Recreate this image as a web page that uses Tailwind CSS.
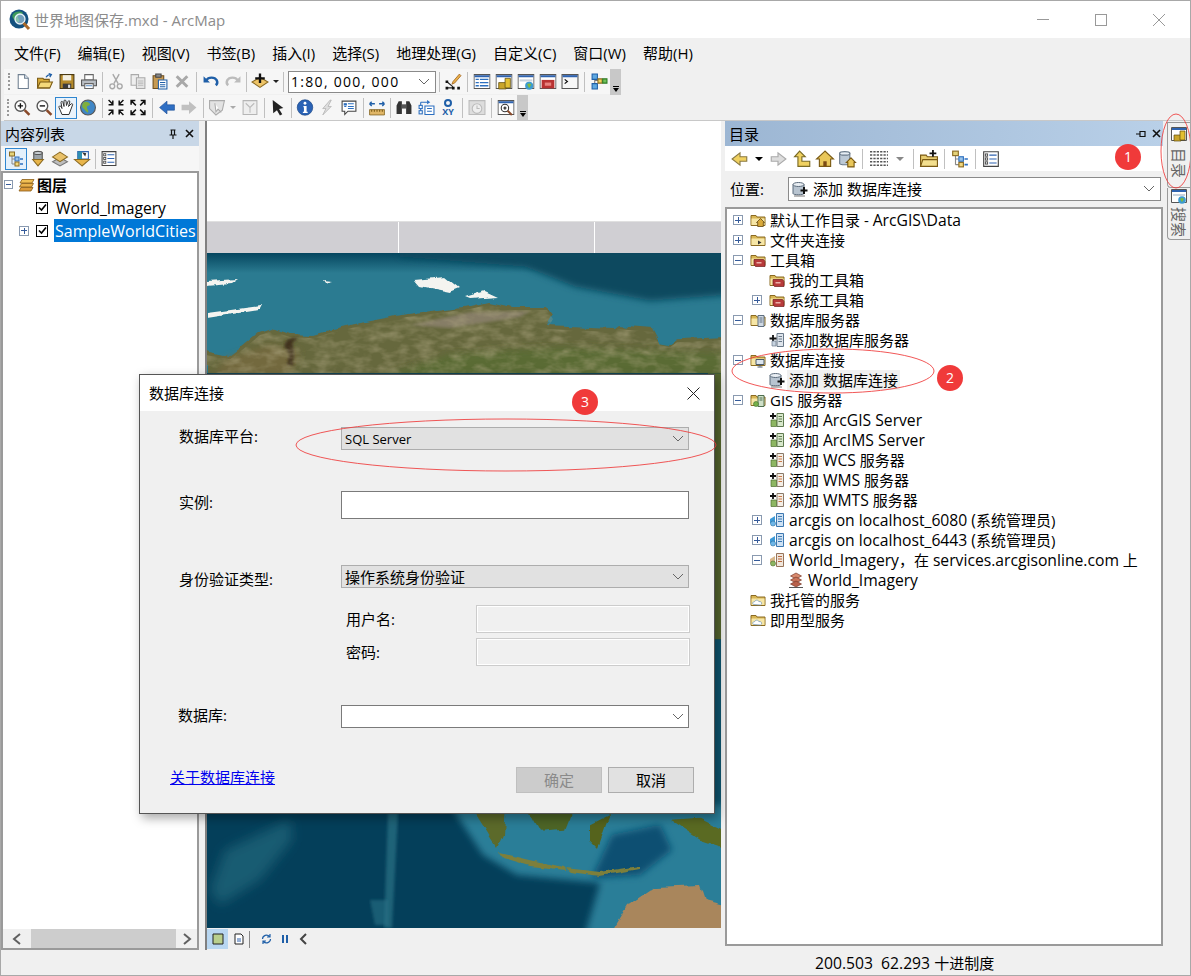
<!DOCTYPE html>
<html lang="en">
<head>
  <meta charset="UTF-8">
  <title>ArcMap</title>
  <script src="https://cdn.jsdelivr.net/npm/@tailwindcss/browser@4"></script>
</head>
<body class="bg-white">

<!-- shared icons -->
<svg class="hidden">
  <symbol id="new" viewBox="0 0 16 16"><path d="M3.5 1.5h6l3.5 3.5v9.500h-9.500z" fill="#fff" stroke="#6f7f90"/><path d="M9.500 1.500v3.500h3.500" fill="#dfe8f2" stroke="#6f7f90"/></symbol>
  <symbol id="open" viewBox="0 0 16 16"><path d="M1 14V5h5l1 1h5v8z" fill="#d9ac3a" stroke="#7a5a14"/><path d="M1 14l2.500-5.500H15L12.500 14z" fill="#f5d97a" stroke="#7a5a14"/><path d="M9 4c1-2 3-2.500 4.500-2.500M11.500 0.500l2.500 1-1.500 2.300" fill="none" stroke="#1f5fa8" stroke-width="1.200"/></symbol>
  <symbol id="save" viewBox="0 0 16 16"><path d="M1.500 1.500h13v13h-13z" fill="#b58a2a" stroke="#4a3a12"/><path d="M4 2h8v5H4z" fill="#f3efe2"/><path d="M4 10h8v4.500H4z" fill="#3c3c3c"/><path d="M9 11h2v3H9z" fill="#ddd"/></symbol>
  <symbol id="print" viewBox="0 0 16 16"><path d="M4 1.500h8v5H4z" fill="#fff" stroke="#666"/><path d="M1 6.500h14v5.500H1z" fill="#b9bec4" stroke="#555"/><path d="M4 10h8v4.500H4z" fill="#fff" stroke="#666"/><path d="M5 12h6" stroke="#5b8fc7"/></symbol>
  <symbol id="cut" viewBox="0 0 16 16"><path d="M5 1l5 9M11 1L6 10" stroke="#a8a8a8" stroke-width="1.300" fill="none"/><circle cx="4.500" cy="12.500" r="2.300" fill="none" stroke="#a8a8a8" stroke-width="1.300"/><circle cx="11.500" cy="12.500" r="2.300" fill="none" stroke="#a8a8a8" stroke-width="1.300"/></symbol>
  <symbol id="copy" viewBox="0 0 16 16"><path d="M1.500 1.500h7v10h-7z" fill="#eee" stroke="#aaa"/><path d="M6.500 4.500h8v10h-8z" fill="#e4e4e4" stroke="#aaa"/><path d="M8 7.500h5M8 9.500h5M8 11.500h5" stroke="#bbb"/></symbol>
  <symbol id="paste" viewBox="0 0 16 16"><path d="M1.500 2.500h10v12h-10z" fill="#c79a52" stroke="#6d4e1e"/><path d="M4 1h5v3H4z" fill="#888" stroke="#444"/><path d="M6.500 6.500h8v8.500h-8z" fill="#fff" stroke="#1f5fa8"/><path d="M8 9h5M8 11h5M8 13h5" stroke="#1f5fa8"/></symbol>
  <symbol id="del" viewBox="0 0 16 16"><path d="M3 3l10 10M13 3L3 13" stroke="#a8a8a8" stroke-width="2.800"/></symbol>
  <symbol id="undo" viewBox="0 0 16 16"><path d="M3.500 7c2-3.500 8-3.500 10 0 .8 1.800.2 3.500-1 4.500" fill="none" stroke="#1f5fa8" stroke-width="2.300"/><path d="M1 3v6h6z" fill="#1f5fa8"/></symbol>
  <symbol id="redo" viewBox="0 0 16 16"><path d="M12.500 7c-2-3.500-8-3.500-10 0-.8 1.800-.2 3.500 1 4.500" fill="none" stroke="#bcbcbc" stroke-width="2.300"/><path d="M15 3v6H9z" fill="#bcbcbc"/></symbol>
  <symbol id="add" viewBox="0 0 16 16"><path d="M8 4l7.500 4.500L8 13.500.5 8.500z" fill="#eec467" stroke="#8a6a22"/><path d="M8 .5v9M3.500 5h9" stroke="#111" stroke-width="2.200"/></symbol>
  <symbol id="edit" viewBox="0 0 16 16"><path d="M2 8l6 5M2 14h7" stroke="#222"/><path d="M1 7h2.500v2.500H1zM1 13h2.500v2.500H1zM7 13h2.500v2.500H7zM12 13h2.500v2.500H12z" fill="#111"/><path d="M8 8l6-7 1.500 1.500-6 7-2.500 1z" fill="#e8b04a" stroke="#9b5c1a" stroke-width=".7"/></symbol>
  <symbol id="win" viewBox="0 0 16 16"><path d="M.5 1.500h15v13H.5z" fill="#fff" stroke="#555"/><path d="M1 2h14v2H1z" fill="#2f63b0"/></symbol>
  <symbol id="wintoc" viewBox="0 0 16 16"><use href="#win"/><path d="M2 6h3M6 6h8M2 9h3M6 9h8M2 12h3M6 12h8" stroke="#2c6fc0" stroke-width="1.200"/></symbol>
  <symbol id="wincat" viewBox="0 0 16 16"><use href="#win"/><path d="M3 9h7v6H3z" fill="#caa52a" stroke="#5f4b0c" stroke-width=".7"/><path d="M9 5h5v9H9z" fill="#e3c032" stroke="#5f4b0c" stroke-width=".7"/></symbol>
  <symbol id="winsearch" viewBox="0 0 16 16"><use href="#win"/><path d="M2 6h12v2H2z" fill="#c9d3de"/><circle cx="11" cy="12" r="3.800" fill="#3c9bd0"/><path d="M9 11c1-1.500 3-1.500 4 0-1 1-1 2-2 3-1-1-1-2-2-3z" fill="#7fba3e"/></symbol>
  <symbol id="wintool" viewBox="0 0 16 16"><use href="#win"/><path d="M2 6.500h12v8H2z" fill="#b93232"/><path d="M5 9h6v3H5z" fill="#e8837f"/></symbol>
  <symbol id="winpy" viewBox="0 0 16 16"><path d="M.5 1.500h15v13H.5z" fill="#f7f7f7" stroke="#555"/><path d="M1 2h14v2H1z" fill="#2f63b0"/><path d="M3 6l2.500 2L3 10" fill="none" stroke="#111" stroke-width="1.200"/></symbol>
  <symbol id="model" viewBox="0 0 16 16"><path d="M4 4v8M4 7h5" stroke="#777"/><path d="M1.500 1h5v5h-5zM1.500 10h5v5h-5z" fill="#5ea8e0" stroke="#1f5fa8"/><path d="M7 5.500h4v4H7z" fill="#f2d35a" stroke="#8a6a22"/><path d="M11.500 5.500h4v4h-4z" fill="#6ec05a" stroke="#2d7a22"/></symbol>
  <symbol id="zoomin" viewBox="0 0 16 16"><circle cx="6.500" cy="6.500" r="5" fill="#fff" stroke="#555" stroke-width="1.300"/><path d="M4 6.500h5M6.500 4v5" stroke="#111" stroke-width="1.300"/><path d="M10.500 10.500l4.500 4.500" stroke="#8a4a2a" stroke-width="2.400"/></symbol>
  <symbol id="zoomout" viewBox="0 0 16 16"><circle cx="6.500" cy="6.500" r="5" fill="#fff" stroke="#555" stroke-width="1.300"/><path d="M4 6.500h5" stroke="#111" stroke-width="1.300"/><path d="M10.500 10.500l4.500 4.500" stroke="#8a4a2a" stroke-width="2.400"/></symbol>
  <symbol id="pan" viewBox="0 0 16 16"><path d="M4 15L1 8c-.5-1.500 1-2 2-1l1 2-1-6c0-1.500 1.500-1.500 2 0l1 4V1.500c0-1.300 1.800-1.300 2 0L8.500 6 10 2c.5-1.300 2-1 1.800.5L10.500 7 13 4.500c1-.8 2 0 1.500 1L11 15z" fill="#fff" stroke="#333"/></symbol>
  <symbol id="globe" viewBox="0 0 16 16"><circle cx="8" cy="8" r="7" fill="#3f86c6" stroke="#555"/><path d="M4 3c3-1 5 0 6 2-1 2-3 1-3 3s2 2 1 5c-2-1-3-3-4-4-2-1-2-4 0-6z" fill="#7fae3e"/></symbol>
  <symbol id="fixin" viewBox="0 0 16 16"><path d="M1 1l4 4M5 1.500V5.500H1M15 1l-4 4M11 1.500V5.500h4M1 15l4-4M5 14.500V10.500H1M15 15l-4-4M11 14.500V10.500h4" stroke="#111" stroke-width="1.400" fill="none"/></symbol>
  <symbol id="fixout" viewBox="0 0 16 16"><path d="M2 2l4 4M1.500 5.500V1.500h4M14 2l-4 4M14.500 5.500V1.500h-4M2 14l4-4M1.500 10.500v4h4M14 14l-4-4M14.500 10.500v4h-4" stroke="#111" stroke-width="1.400" fill="none"/></symbol>
  <symbol id="back" viewBox="0 0 16 16"><path d="M1 8l7-6v3.500h7v5H8V14z" fill="#2f6fc4" stroke="#1f4f94" stroke-width=".6"/></symbol>
  <symbol id="fwd" viewBox="0 0 16 16"><path d="M15 8L8 2v3.500H1v5h7V14z" fill="#c0c0c0"/></symbol>
  <symbol id="selfeat" viewBox="0 0 16 16"><path d="M1 1.500h14l-2 9L7 15 1 9z" fill="#e3e3e3" stroke="#aaa"/><path d="M6 4l1 8 2-2.500 3 3" fill="#fff" stroke="#aaa"/></symbol>
  <symbol id="clearsel" viewBox="0 0 16 16"><path d="M1.500 1.500h13v13h-13z" fill="#eee" stroke="#b5b5b5"/><path d="M4 4l4 4 4-4M8 8v5" stroke="#bbb" fill="none"/></symbol>
  <symbol id="pointer" viewBox="0 0 16 16"><path d="M3 1l10 7.500-4 .8 3 5-2.200 1.200-2.800-5-3.500 3z" fill="#222"/></symbol>
  <symbol id="info" viewBox="0 0 16 16"><circle cx="8" cy="8" r="7.300" fill="#2a62b5" stroke="#123f80" stroke-width=".6"/><path d="M6.500 6.500h3V12h1v1.200H6V12h1V7.700H6.500z" fill="#fff"/><circle cx="8" cy="4" r="1.300" fill="#fff"/></symbol>
  <symbol id="flash" viewBox="0 0 16 16"><path d="M11 1L4 9h3l-3 6 8-8H9l3-6z" fill="#dedede" stroke="#b0b0b0" stroke-width=".7"/></symbol>
  <symbol id="popup" viewBox="0 0 16 16"><path d="M1.500 2h13v9.500H7l-3 3v-3H1.500z" fill="#fff" stroke="#444"/><path d="M3.500 4.500h2v1h-2zM7 4.500h5.500M3.500 7h2M7 7h5.500M7 9h5.500" stroke="#2c6fc0"/></symbol>
  <symbol id="measure" viewBox="0 0 16 16"><path d="M1 10h14v5H1z" fill="#e0b667" stroke="#7a5a14" stroke-width=".7"/><path d="M3 10v2M5.500 10v2M8 10v2M10.500 10v2M13 10v2" stroke="#7a5a14"/><path d="M1 4.500h5M1 4.500l2-2M1 4.500l2 2M15 4.500h-5M15 4.500l-2-2M15 4.500l-2 2" stroke="#1f5fa8" stroke-width="1.300" fill="none"/></symbol>
  <symbol id="find" viewBox="0 0 16 16"><path d="M1 14V6l2-4h3v12zM15 14V6l-2-4h-3v12z" fill="#333"/><path d="M6 5h4v4H6z" fill="#555"/></symbol>
  <symbol id="route" viewBox="0 0 16 16"><path d="M7 6.500h8.500v8H7z" fill="#fff" stroke="#2c6fc0"/><path d="M9 9h4.500M9 11.500h4.500" stroke="#2c6fc0"/><path d="M3 3v10M3 3h6" stroke="#2c6fc0"/><path d="M9 1l3 2-3 2z" fill="#2c6fc0"/><rect x="1.500" y="6" width="3" height="3" fill="#fff" stroke="#2c6fc0"/><rect x="1.500" y="11" width="3" height="3" fill="#fff" stroke="#2c6fc0"/></symbol>
  <symbol id="time" viewBox="0 0 16 16"><path d="M.5 1.500h15v13H.5z" fill="#ddd" stroke="#bbb"/><circle cx="8" cy="9" r="4.500" fill="#eee" stroke="#bbb"/><path d="M8 6v3h2.500" stroke="#bbb" fill="none"/></symbol>
  <symbol id="viewer" viewBox="0 0 16 16"><use href="#win"/><circle cx="7" cy="8.500" r="3.500" fill="#fff" stroke="#333"/><path d="M5.500 8.500h3M7 7v3" stroke="#111"/><path d="M9.500 11l4 4" stroke="#8a4a2a" stroke-width="2"/></symbol>
  <symbol id="tree" viewBox="0 0 16 16"><path d="M4 5v8M4 8h3M4 13h3" stroke="#888"/><rect x="1.500" y="1" width="5" height="4" fill="#e4d37a" stroke="#8a6a22"/><rect x="7" y="6" width="4" height="4" fill="#9cc4e8" stroke="#2c6fc0"/><rect x="7" y="11" width="4" height="4" fill="#f1d87f" stroke="#8a6a22"/><path d="M12 8h3M12 13h3" stroke="#2c6fc0" stroke-width="1.500"/></symbol>
  <symbol id="options" viewBox="0 0 16 16"><path d="M1.500 1.500h13v13h-13z" fill="#fff" stroke="#444"/><rect x="3" y="3.500" width="2" height="2" fill="none" stroke="#444" stroke-width=".8"/><rect x="3" y="7" width="2" height="2" fill="none" stroke="#444" stroke-width=".8"/><rect x="3" y="10.500" width="2" height="2" fill="none" stroke="#444" stroke-width=".8"/><path d="M6.500 4.500H13M6.500 8H13M6.500 11.500H13" stroke="#2f63b0"/></symbol>
  <symbol id="source" viewBox="0 0 16 16"><path d="M4 2.500h8v7H4z" fill="#9aa2a8" stroke="#555"/><ellipse cx="8" cy="2.800" rx="4" ry="1.500" fill="#c9cfd4" stroke="#555"/><path d="M3 9h10l-5 6z" fill="#e8b54a" stroke="#8a6a22"/></symbol>
  <symbol id="visible" viewBox="0 0 16 16"><path d="M8 7l7 4-7 4-7-4z" fill="#bdbdbd" stroke="#777"/><path d="M8 2l7 4.500-7 4.500-7-4.500z" fill="#e9c169" stroke="#8a6a22"/></symbol>
  <symbol id="selectable" viewBox="0 0 16 16"><path d="M4 1.500h10v7H4z" fill="#fff" stroke="#2f63b0"/><path d="M8 2l3 4 1-3z" fill="#333"/><path d="M4 1.500h4v7H4z" fill="#2f8fb0"/><path d="M8 15L1 9h14z" fill="#e8b54a" stroke="#8a6a22"/></symbol>
  <symbol id="layers" viewBox="0 0 16 16"><path d="M3 2.500h12l-2 3.500H1z" fill="#f0bf55" stroke="#8a5c14" stroke-width=".8"/><path d="M2.500 6.500h12l-2 3.500H.5z" fill="#e9b04a" stroke="#8a5c14" stroke-width=".8"/><path d="M2 10.500h12l-2 3.500H0z" fill="#dc9a3a" stroke="#8a5c14" stroke-width=".8"/></symbol>
  <symbol id="cback" viewBox="0 0 16 16"><path d="M1 8l7-5.500V6h6v4H8v3.500z" fill="#f0d160" stroke="#8a7a44"/></symbol>
  <symbol id="cfwd" viewBox="0 0 16 16"><path d="M15 8L8 2.500V6H2v4h6v3.500z" fill="#ddd" stroke="#aaa"/></symbol>
  <symbol id="cup" viewBox="0 0 16 16"><path d="M5 1l5 5H7v4h7v4.500H3.500V6H.5z" fill="#f0d160" stroke="#7a6a24"/></symbol>
  <symbol id="home" viewBox="0 0 16 16"><path d="M8 1L.5 8h2.500v6.500h10V8h2.500z" fill="#e9c75a" stroke="#7a5a14"/><path d="M6.500 10h3v4.500h-3z" fill="#7a4a14"/></symbol>
  <symbol id="dbhome" viewBox="0 0 16 16"><path d="M1.500 3v9c0 1.500 9 1.500 9 0V3z" fill="#bcc9d6" stroke="#6a7a8a"/><ellipse cx="6" cy="3" rx="4.500" ry="1.600" fill="#e6edf4" stroke="#6a7a8a"/><path d="M11.500 7l-4 4h1.200v4h5.600v-4h1.200z" fill="#e9c75a" stroke="#7a5a14"/></symbol>
  <symbol id="grid" viewBox="0 0 16 16"><path d="M0 1.500h16M0 4.500h16M0 7.500h16M0 10.500h16M0 13.500h16" stroke="#555" stroke-dasharray="2 1" stroke-width="1.300"/></symbol>
  <symbol id="newfolder" viewBox="0 0 16 16"><path d="M.5 14.500v-10h5l1 1.500h9v8.500z" fill="#e8cd70" stroke="#7a5a14"/><path d="M.5 14.500l2-6h13v6z" fill="#f3df8e" stroke="#7a5a14"/><path d="M11.500 0v6M8.500 3h6" stroke="#111" stroke-width="1.600"/></symbol>
  <symbol id="folder" viewBox="0 0 16 16"><path d="M1 13.500v-10h5l1 1.500h8v8.500z" fill="#d8b655" stroke="#8a6a22"/><path d="M1.500 6.500h13v6.500h-13z" fill="#f6e6a6"/></symbol>
  <symbol id="fhome" viewBox="0 0 16 16"><use href="#folder"/><path d="M10.500 6.500L6.500 10.500h1.200v4h5.600v-4h1.200z" fill="#d9a93a" stroke="#5f4510" stroke-width=".8"/></symbol>
  <symbol id="fconn" viewBox="0 0 16 16"><use href="#folder"/><path d="M8 8.500v4l3.500-2z" fill="#333"/></symbol>
  <symbol id="ftool" viewBox="0 0 16 16"><use href="#folder"/><path d="M4 7.500h9.500l1.500 2v5H5.500L4 12.500z" fill="#b73a3a" stroke="#6e1c1c" stroke-width=".7"/><path d="M6.500 10h5v1.500h-5z" fill="#ecb0aa"/></symbol>
  <symbol id="fserver" viewBox="0 0 16 16"><use href="#folder"/><path d="M8 3.500h6v11H8z" fill="#cfd8e2" stroke="#5f6f80"/><path d="M9.500 6h3M9.500 8h3M9.500 10h3" stroke="#5f6f80"/></symbol>
  <symbol id="fdb" viewBox="0 0 16 16"><use href="#folder"/><path d="M6 7.500h8v5H6z" fill="#dce5ee" stroke="#4a5a6a"/><path d="M10 12.500v2M7.500 15h5" stroke="#4a5a6a"/></symbol>
  <symbol id="fgis" viewBox="0 0 16 16"><use href="#folder"/><path d="M8 3.500h6v11H8z" fill="#cfe0c8" stroke="#4f6f50"/><path d="M9.500 6h3M9.500 8h3" stroke="#4f6f50"/><circle cx="6" cy="12" r="2.500" fill="#77b04a" stroke="#3b6f2a" stroke-width=".6"/></symbol>
  <symbol id="fcloud" viewBox="0 0 16 16"><use href="#folder"/><path d="M3.500 12.500c-1.500-1-.5-3 1-2.800 1-2 3.800-2 4.500 0 2-1 3.800 2 1.500 3.300z" fill="#fff" stroke="#6a90b8" stroke-width=".7"/></symbol>
  <symbol id="addsrv" viewBox="0 0 16 16"><path d="M8 1.500h6.500v13H8z" fill="#dfe5ec" stroke="#6a7a8a"/><path d="M9.500 4.500h3.500M9.500 7h3.500M9.500 9.500h3.500" stroke="#6a7a8a"/><path d="M4 3v7M.5 6.500h7" stroke="#111" stroke-width="1.800"/><path d="M3 9h4v5H3z" fill="#c7d3df" stroke="#6a7a8a" stroke-width=".7"/></symbol>
  <symbol id="adddb" viewBox="0 0 16 16"><path d="M1 3.500v9c0 1.700 11 1.700 11 0v-9z" fill="#b8c4d0" stroke="#5a6a7a"/><ellipse cx="6.500" cy="3.500" rx="5.500" ry="2" fill="#e9eef3" stroke="#5a6a7a"/><path d="M2 15h11" stroke="#777"/><path d="M12 6v7M8.500 9.500h7" stroke="#111" stroke-width="2"/></symbol>
  <symbol id="addgis" viewBox="0 0 16 16"><path d="M8 1.500h6.500v13H8z" fill="#d8e8cc" stroke="#5f7a50"/><path d="M9.500 4.500h3.500M9.500 7h3.500M9.500 9.500h3.500" stroke="#5f7a50"/><path d="M4 1v6M1 4h6" stroke="#111" stroke-width="1.800"/><path d="M2 8h5.500v6.500H2z" fill="#8db662" stroke="#4f6f30" stroke-width=".7"/></symbol>
  <symbol id="addwms" viewBox="0 0 16 16"><path d="M8 1.500h6.500v13H8z" fill="#f4eee6" stroke="#8a7a6a"/><path d="M9.500 4.500h3.500M9.500 7h3.500M9.500 9.500h3.500" stroke="#c97a4a"/><path d="M4 1v6M1 4h6" stroke="#111" stroke-width="1.800"/><path d="M2 8h5.500v6.500H2z" fill="#8db662" stroke="#4f6f30" stroke-width=".7"/></symbol>
  <symbol id="srvblue" viewBox="0 0 16 16"><path d="M7.500 1.500h7v13h-7z" fill="#cfe2f4" stroke="#3d78b0"/><path d="M9 4.500h4M9 7h4M9 9.500h4" stroke="#3d78b0"/><path d="M1 7l5-3v9l-5-2z" fill="#3d9ad8"/><circle cx="4" cy="11.500" r="2.500" fill="#6fb7e8" stroke="#2d6fa0" stroke-width=".6"/></symbol>
  <symbol id="srvorange" viewBox="0 0 16 16"><path d="M7.500 1.500h7v13h-7z" fill="#f0e6dc" stroke="#97745a"/><path d="M9 4.500h4M9 7h4M9 9.500h4" stroke="#b9683e"/><path d="M1 7l5-3v9l-5-2z" fill="#d9b78a"/><circle cx="4" cy="11.500" r="2.500" fill="#8db662" stroke="#4f6f30" stroke-width=".6"/></symbol>
  <symbol id="stack" viewBox="0 0 16 16"><path d="M8 1l5.500 3L8 7 2.500 4z" fill="#d98a6e" stroke="#7a3a2a" stroke-width=".7"/><path d="M8 5l5.500 3L8 11 2.500 8z" fill="#c9745a" stroke="#7a3a2a" stroke-width=".7"/><path d="M8 9l5.500 3L8 15l-5.500-3z" fill="#b8604a" stroke="#7a3a2a" stroke-width=".7"/><path d="M1 15.500h14" stroke="#555"/></symbol>
  <symbol id="arcmap" viewBox="0 0 22 22"><circle cx="10" cy="10" r="9.500" fill="#14517f"/><path d="M4 5c3-3 8-3 10-1-1 2-4 1-5 3s2 3 1 6c-3 0-5-2-6-4-1-1-1-3 0-4z" fill="#3d9a5a"/><circle cx="11" cy="10" r="5" fill="#bfe0ee" fill-opacity=".55" stroke="#e8f2f6" stroke-width="1.300"/><path d="M14.500 14l5.500 6" stroke="#a8682a" stroke-width="3"/></symbol>
</svg>

<div class="relative w-[1191px] h-[976px] overflow-hidden flex flex-col bg-[#f0f0f0] border-x border-[#a8a8a8] text-[15px] leading-5 text-black font-['Open_Sans','Noto_Sans_CJK_SC',sans-serif]">

  <!-- Title bar -->
  <div class="h-[38px] shrink-0 bg-white border-t border-[#a8a8a8] flex items-center pl-[8px] relative">
    <svg class="w-[22px] h-[22px] mr-[3px]"><use href="#arcmap"/></svg>
    <span class="text-[#8c8c8c] text-[15px]">世界地图保存.mxd - ArcMap</span>
    <div class="ml-auto flex items-center pr-[2px]">
      <span class="w-[58px] flex justify-center"><i class="block w-3 h-px bg-[#999]"></i></span>
      <span class="w-[58px] flex justify-center"><i class="block w-3 h-3 border border-[#999]"></i></span>
      <span class="w-[58px] flex justify-center"><svg class="w-3 h-3" viewBox="0 0 12 12"><path d="M0 0l12 12M12 0L0 12" stroke="#999"/></svg></span>
    </div>
  </div>

  <!-- Menu -->
  <div class="h-[30px] shrink-0 flex items-center pl-[13px] gap-[17px]">
    <span>文件(F)</span><span>编辑(E)</span><span>视图(V)</span><span>书签(B)</span><span>插入(I)</span><span>选择(S)</span><span>地理处理(G)</span><span>自定义(C)</span><span>窗口(W)</span><span>帮助(H)</span>
  </div>

  <!-- Toolbar 1 -->
  <div class="h-[27px] shrink-0 flex items-center ml-[3px]">
    <div class="h-[25px] flex items-center bg-[#f6f6f6] pl-[4px]">
      <i class="w-[2px] h-[17px] mr-[2px] border-l-2 border-dotted border-[#999]"></i>
      <svg class="w-[22px] h-[17px]"><use href="#new"/></svg>
      <svg class="w-[22px] h-[17px]"><use href="#open"/></svg>
      <svg class="w-[22px] h-[17px]"><use href="#save"/></svg>
      <svg class="w-[22px] h-[17px]"><use href="#print"/></svg>
      <i class="w-px h-5 mx-[2px] bg-[#c0c0c0]"></i>
      <svg class="w-[22px] h-[17px]"><use href="#cut"/></svg>
      <svg class="w-[22px] h-[17px]"><use href="#copy"/></svg>
      <svg class="w-[22px] h-[17px]"><use href="#paste"/></svg>
      <svg class="w-[22px] h-[17px]"><use href="#del"/></svg>
      <i class="w-px h-5 mx-[3px] bg-[#c0c0c0]"></i>
      <svg class="w-[22px] h-[17px]"><use href="#undo"/></svg>
      <svg class="w-[22px] h-[17px]"><use href="#redo"/></svg>
      <i class="w-px h-5 mx-[2px] bg-[#c0c0c0]"></i>
      <svg class="w-[22px] h-[17px]"><use href="#add"/></svg>
      <i class="w-0 h-0 ml-[2px] mr-[4px] border-x-[3px] border-t-[3px] border-x-transparent border-t-[#222]"></i>
      <i class="w-px h-5 mr-[4px] bg-[#c0c0c0]"></i>
      <div class="w-[148px] h-[22px] bg-white border border-[#8a8a8a] flex items-center pl-[2px] relative text-[14px] tracking-[1.300px]">1:80, 000, 000
        <svg class="absolute right-[5px] top-[6px] w-[12px] h-[8px]" viewBox="0 0 12 8"><path d="M1 1l5 5 5-5" fill="none" stroke="#666"/></svg>
      </div>
      <i class="w-px h-5 ml-[3px] bg-[#c0c0c0]"></i>
      <svg class="w-[22px] h-[17px] ml-[2px]"><use href="#edit"/></svg>
      <i class="w-px h-5 mx-[3px] bg-[#c0c0c0]"></i>
      <svg class="w-[22px] h-[17px]"><use href="#wintoc"/></svg>
      <svg class="w-[22px] h-[17px]"><use href="#wincat"/></svg>
      <svg class="w-[22px] h-[17px]"><use href="#winsearch"/></svg>
      <svg class="w-[22px] h-[17px]"><use href="#wintool"/></svg>
      <svg class="w-[22px] h-[17px]"><use href="#winpy"/></svg>
      <i class="w-px h-5 mx-[3px] bg-[#c0c0c0]"></i>
      <svg class="w-[22px] h-[17px]"><use href="#model"/></svg>
    </div>
    <div class="w-[11px] h-[26px] bg-[#c8c8c8] flex flex-col items-center justify-end pb-[3px]"><i class="w-[6px] h-px bg-black mb-px"></i><i class="w-0 h-0 border-x-[3px] border-t-[4px] border-x-transparent border-t-black"></i></div>
  </div>

  <!-- Toolbar 2 -->
  <div class="h-[26px] shrink-0 flex items-center ml-[3px] border-b border-[#c8c8c8]">
    <div class="h-[25px] flex items-center bg-[#f6f6f6] pl-[3px]">
      <i class="w-[2px] h-[17px] mr-[2px] border-l-2 border-dotted border-[#999]"></i>
      <svg class="w-[22px] h-[17px]"><use href="#zoomin"/></svg>
      <svg class="w-[22px] h-[17px]"><use href="#zoomout"/></svg>
      <span class="w-[22px] h-[22px] flex items-center justify-center border border-[#2f86d0] bg-[#eaf3fb]"><svg class="w-4 h-[17px]"><use href="#pan"/></svg></span>
      <svg class="w-[22px] h-[17px]"><use href="#globe"/></svg>
      <i class="w-px h-5 ml-[3px] mr-[2px] bg-[#c0c0c0]"></i>
      <svg class="w-[22px] h-[17px]"><use href="#fixin"/></svg>
      <svg class="w-[22px] h-[17px]"><use href="#fixout"/></svg>
      <i class="w-px h-5 mx-[3px] bg-[#c0c0c0]"></i>
      <svg class="w-[22px] h-[17px]"><use href="#back"/></svg>
      <svg class="w-[22px] h-[17px]"><use href="#fwd"/></svg>
      <i class="w-px h-5 ml-[3px] mr-[2px] bg-[#c0c0c0]"></i>
      <svg class="w-[22px] h-[17px]"><use href="#selfeat"/></svg>
      <i class="w-0 h-0 ml-[2px] mr-[3px] border-x-[3px] border-t-[3px] border-x-transparent border-t-[#aaa]"></i>
      <svg class="w-[22px] h-[17px]"><use href="#clearsel"/></svg>
      <i class="w-px h-5 ml-[3px] mr-[2px] bg-[#c0c0c0]"></i>
      <svg class="w-[22px] h-[17px]"><use href="#pointer"/></svg>
      <i class="w-px h-5 mx-[2px] bg-[#c0c0c0]"></i>
      <svg class="w-[22px] h-[17px]"><use href="#info"/></svg>
      <svg class="w-[22px] h-[17px]"><use href="#flash"/></svg>
      <svg class="w-[22px] h-[17px]"><use href="#popup"/></svg>
      <i class="w-px h-5 ml-[3px] mr-[2px] bg-[#c0c0c0]"></i>
      <svg class="w-[22px] h-[17px]"><use href="#measure"/></svg>
      <i class="w-px h-5 mx-[2px] bg-[#c0c0c0]"></i>
      <svg class="w-[22px] h-[17px]"><use href="#find"/></svg>
      <svg class="w-[22px] h-[17px]"><use href="#route"/></svg>
      <span class="w-[22px] flex flex-col items-center text-[9px] leading-[9px] font-bold text-[#1f5fa8]"><i class="block w-[8px] h-[8px] rounded-full border-2 border-[#1f5fa8]"></i>XY</span>
      <i class="w-px h-5 mx-[3px] bg-[#c0c0c0]"></i>
      <svg class="w-[22px] h-[17px]"><use href="#time"/></svg>
      <i class="w-px h-5 mx-[3px] bg-[#c0c0c0]"></i>
      <svg class="w-[22px] h-[17px]"><use href="#viewer"/></svg>
    </div>
    <div class="w-[11px] h-[25px] bg-[#c8c8c8] flex flex-col items-center justify-end pb-[3px]"><i class="w-[6px] h-px bg-black mb-px"></i><i class="w-0 h-0 border-x-[3px] border-t-[4px] border-x-transparent border-t-black"></i></div>
  </div>

  <!-- Main area -->
  <div class="flex-1 min-h-0 flex">

    <!-- Table of contents -->
    <div class="w-[198px] shrink-0 flex flex-col">
      <div class="h-[25px] shrink-0 bg-[#c8d7e7] flex items-center pl-[4px] pr-[5px]">
        <span>内容列表</span>
        <svg class="ml-auto w-[10px] h-[10px] mr-[7px]" viewBox="0 0 10 10"><path d="M2.500 1h5M3.500 1v5M6.500 1v5M1.500 6h7M5 6v4" stroke="#111" stroke-width="1.200" fill="none"/></svg>
        <svg class="w-[9px] h-[9px]" viewBox="0 0 9 9"><path d="M1 1l7 7M8 1L1 8" stroke="#111" stroke-width="1.600"/></svg>
      </div>
      <div class="h-[25px] shrink-0 flex items-center pl-[4px] bg-[#f6f6f6]">
        <span class="w-[22px] h-[22px] flex items-center justify-center border border-[#2f86d0] bg-[#e4f0fb]"><svg class="w-4 h-4"><use href="#tree"/></svg></span>
        <svg class="w-[22px] h-[17px]"><use href="#source"/></svg>
        <svg class="w-[22px] h-[17px]"><use href="#visible"/></svg>
        <svg class="w-[22px] h-[17px]"><use href="#selectable"/></svg>
        <i class="w-px h-5 mx-[2px] bg-[#c0c0c0]"></i>
        <svg class="w-[22px] h-[17px]"><use href="#options"/></svg>
      </div>
      <div class="flex-1 min-h-0 bg-white border-2 border-[#9a9a9a] flex flex-col relative">
        <div class="flex-1">
          <div class="h-[23px] flex items-center pl-[1px]">
            <span class="w-[9px] h-[9px] border border-[#8a9ab0] flex items-center justify-center mr-[3px]"><i class="w-[5px] h-px bg-[#345a9a]"></i></span>
            <svg class="w-[18px] h-4 mr-[1px] ml-[2px]"><use href="#layers"/></svg>
            <span class="font-bold">图层</span>
          </div>
          <div class="h-[23px] flex items-center pl-[33px]">
            <span class="w-[12px] h-[12px] border border-black flex items-center justify-center mr-[8px]"><svg class="w-[9px] h-[9px]" viewBox="0 0 9 9"><path d="M1 4.500l2.500 2.500L8 1.500" fill="none" stroke="#000" stroke-width="1.600"/></svg></span>
            <span class="text-[15.700px]">World_Imagery</span>
          </div>
          <div class="h-[23px] flex items-center pl-[16px]">
            <span class="w-[10px] h-[10px] border border-[#8a9ab0] flex items-center justify-center mr-[7px] relative"><i class="w-[6px] h-px bg-[#345a9a]"></i><i class="absolute w-px h-[6px] bg-[#345a9a]"></i></span>
            <span class="w-[12px] h-[12px] border border-black flex items-center justify-center mr-[6px]"><svg class="w-[9px] h-[9px]" viewBox="0 0 9 9"><path d="M1 4.500l2.500 2.500L8 1.500" fill="none" stroke="#000" stroke-width="1.600"/></svg></span>
            <span class="bg-[#0078d7] text-white px-px h-[23px] flex items-center text-[16px]">SampleWorldCities</span>
          </div>
        </div>
        <div class="h-[19px] bg-[#f0f0f0] flex items-center">
          <svg class="w-[28px] h-[12px]" viewBox="0 0 28 12"><path d="M17 1l-6 5 6 5" fill="none" stroke="#606060" stroke-width="2"/></svg>
          <div class="w-[145px] h-[19px] bg-[#cdcdcd]"></div>
          <svg class="w-[20px] h-[12px]" viewBox="0 0 20 12"><path d="M8 1l6 5-6 5" fill="none" stroke="#606060" stroke-width="2"/></svg>
        </div>
      </div>
    </div>

    <!-- Map -->
    <div class="w-[516px] shrink-0 ml-[6px] flex flex-col border-l-2 border-[#808080]">
      <div class="h-[100px] shrink-0 bg-white"></div>
      <div class="h-[32px] shrink-0 bg-[#d0cfd3] border-t border-[#e0e0e0] relative">
        <i class="absolute left-[191px] top-0 h-full w-px bg-white"></i>
        <i class="absolute left-[387px] top-0 h-full w-px bg-white"></i>
      </div>
      <svg class="block flex-1 min-h-0 w-full" viewBox="207 254 514 674" preserveAspectRatio="none">
        <defs>
          <linearGradient id="deep" x1="0" y1="0" x2="0" y2="1"><stop offset="0" stop-color="#05465f"/><stop offset="1" stop-color="#2b7b91"/></linearGradient>
          <filter id="soft" x="-5%" y="-5%" width="110%" height="110%"><feGaussianBlur stdDeviation="1.500"/></filter>
          <filter id="blur3" x="-20%" y="-20%" width="140%" height="140%"><feGaussianBlur stdDeviation="3.500"/></filter>
          <filter id="softer" x="-30%" y="-30%" width="160%" height="160%"><feGaussianBlur stdDeviation="6"/></filter>
          <filter id="coast" x="-5%" y="-5%" width="110%" height="110%"><feTurbulence type="fractalNoise" baseFrequency=".05" numOctaves="4" seed="7"/><feDisplacementMap in="SourceGraphic" scale="7" xChannelSelector="R" yChannelSelector="G"/><feGaussianBlur stdDeviation=".5"/></filter>
          <filter id="grain" x="0" y="0" width="100%" height="100%"><feTurbulence type="fractalNoise" baseFrequency=".06 .12" numOctaves="3" seed="3"/><feColorMatrix values="0 0 0 0 .42  0 0 0 0 .38  0 0 0 0 .22  2 0 0 0 -.75"/></filter>
          <clipPath id="land"><path d="M207 356 230 360 243 350 260 336 272 332 290 338 313 339 333 333 370 325 407 318 470 310 487 306 513 311 547 311 553 320 547 330 613 333 617 330 653 333 660 346 670 348 677 343 721 341V374H207Z"/></clipPath>
        </defs>
        <rect x="207" y="254" width="514" height="120" fill="#2b7b91"/>
        <rect x="207" y="254" width="514" height="20" fill="url(#deep)"/>
        <path d="M400 250H730V296L650 302 575 288 525 268 400 258z" fill="#07485f" filter="url(#blur3)"/>
        <g filter="url(#coast)">
          <path d="M207 352 230 357 243 347 260 333 272 329 290 335 313 336 333 330 370 322 407 315 470 307 487 303 513 308 547 308 553 317 547 327 613 330 617 327 653 330 660 343 670 345 677 340 725 338V380H207Z" fill="#66673d"/>
          <path d="M207 313 260 306 258 310 207 318ZM207 282 238 280 232 284 207 286ZM323 281 333 282 325 284ZM414 281 445 278 460 290 450 294 420 288ZM465 298 485 292 498 298 470 300Z" fill="#f4f4f0"/>
        </g>
        <path d="M410 326 470 313 530 312 520 318 450 329Z" fill="#8d8370" fill-opacity=".8" filter="url(#soft)"/>
        <path d="M380 378 450 355 560 348 725 354V378Z" fill="#566d33" fill-opacity=".75" filter="url(#blur3)"/>
        <path d="M212 378 225 360 270 345 300 352 290 378Z" fill="#75693f" fill-opacity=".8" filter="url(#blur3)"/>
        <path d="M288 340 284 346 289 356 287 366 293 366 294 352 292 344 298 338Z" fill="#40301f" filter="url(#soft)"/>
        <g clip-path="url(#land)"><rect x="207" y="300" width="514" height="74" filter="url(#grain)" opacity=".55"/></g>
        <rect x="207" y="374" width="514" height="554" fill="#043f5a"/>
        <path d="M708 374H721V640H708Z" fill="#56672f"/>
        <path d="M708 640H721V813H708Z" fill="#0e5670"/>
        <path d="M450 805 483 855 517 875 600 883 585 935H730V805Z" fill="#2c7e98" filter="url(#blur3)"/>
        <path d="M612 835 660 825 672 850 640 875 592 878Z" fill="#0c4f72" filter="url(#blur3)"/>
        <g filter="url(#coast)">
          <path d="M470 805 497 848 503 835 505 805Z" fill="#5c6a2a"/>
          <path d="M525 805H575L565 830 540 832Z" fill="#4e6528"/>
          <path d="M500 853 530 860 562 867 565 870 530 866 503 858ZM565 868 600 872 640 866 640 869 600 876 570 872Z" fill="#7d7f3a"/>
          <path d="M590 825 610 815 606 825 598 848 590 840Z" fill="#54641f"/>
          <path d="M670 820 700 818 725 830V848L700 840Z" fill="#5a6a22"/>
          <path d="M610 935 628 905 655 887 700 885 705 900 725 905V935Z" fill="#a9865c"/>
        </g>
        <path d="M210 890 225 850 290 820 292 840 260 880 220 905Z" fill="#2a7285" fill-opacity=".55" filter="url(#softer)"/>
        <path d="M388 813H398L392 928H384Z" fill="#2a7285" fill-opacity=".7" filter="url(#soft)"/>
        <path d="M370 900H388V925H375Z" fill="#2a7285" fill-opacity=".6" filter="url(#soft)"/>
      </svg>
      <div class="h-[22px] shrink-0 bg-[#f0f0f0] flex items-center">
        <span class="w-[21px] h-[20px] bg-[#b8d6f0] flex items-center justify-center"><svg class="w-3 h-3" viewBox="0 0 12 12"><path d="M1 1h10v10H1z" fill="#b9cf8c" stroke="#222"/></svg></span>
        <span class="w-[21px] flex justify-center"><svg class="w-3 h-3" viewBox="0 0 12 12"><path d="M2 1h6l2 2v8H2z" fill="#fff" stroke="#222"/><path d="M4 6h4M4 8h4" stroke="#2f63b0"/></svg></span>
        <i class="w-px h-[17px] bg-[#888]"></i>
        <svg class="w-[15px] h-3 ml-[9px]" viewBox="0 0 12 12"><path d="M2 6a4 4 0 0 1 7-2.500M10 6a4 4 0 0 1-7 2.500M9.500 1v3h-3M2.500 11V8h3" fill="none" stroke="#1f5fa8" stroke-width="1.200"/></svg>
        <span class="ml-[8px] w-[6px] h-[8px] border-x-2 border-[#1f5fa8]"></span>
        <svg class="w-[10px] h-3 ml-[11px]" viewBox="0 0 10 12"><path d="M7 1L2 6l5 5" fill="none" stroke="#444" stroke-width="2"/></svg>
      </div>
    </div>

    <!-- Catalog -->
    <div class="w-[438px] shrink-0 ml-[4px] flex flex-col">
      <div class="h-[25px] shrink-0 bg-gradient-to-r from-[#9cb6d3] to-[#b9d0e8] flex items-center pl-[4px] pr-[2px]">
        <span>目录</span>
        <svg class="ml-auto w-[10px] h-[10px] mr-[6px]" viewBox="0 0 10 10"><path d="M0 5h4M4 2.500h5v5H4z" stroke="#111" stroke-width="1.200" fill="none"/></svg>
        <svg class="w-[9px] h-[9px]" viewBox="0 0 9 9"><path d="M1 1l7 7M8 1L1 8" stroke="#111" stroke-width="1.600"/></svg>
      </div>
      <div class="h-[25px] shrink-0 bg-white flex items-center pl-[5px]">
        <svg class="w-[20px] h-[18px]"><use href="#cback"/></svg>
        <i class="w-0 h-0 mx-[5px] border-x-[4px] border-t-[4px] border-x-transparent border-t-black"></i>
        <svg class="w-[20px] h-[18px]"><use href="#cfwd"/></svg>
        <svg class="w-[22px] h-[18px] ml-[4px]"><use href="#cup"/></svg>
        <svg class="w-[22px] h-[18px]"><use href="#home"/></svg>
        <svg class="w-[22px] h-[18px]"><use href="#dbhome"/></svg>
        <i class="w-px h-5 mx-[4px] bg-[#c0c0c0]"></i>
        <svg class="w-[24px] h-[18px]"><use href="#grid"/></svg>
        <i class="w-0 h-0 mx-[5px] border-x-[4px] border-t-[4px] border-x-transparent border-t-[#888]"></i>
        <i class="w-px h-5 mx-[4px] bg-[#c0c0c0]"></i>
        <svg class="w-[22px] h-[18px]"><use href="#newfolder"/></svg>
        <i class="w-px h-5 mx-[4px] bg-[#c0c0c0]"></i>
        <svg class="w-[22px] h-[18px]"><use href="#tree"/></svg>
        <i class="w-px h-5 mx-[4px] bg-[#c0c0c0]"></i>
        <svg class="w-[22px] h-[18px]"><use href="#options"/></svg>
      </div>
      <div class="h-[36px] shrink-0 flex items-center pl-[5px] pr-[2px]">
        <span class="w-[58px]">位置:</span>
        <div class="flex-1 h-[24px] bg-white border border-[#8a8a8a] flex items-center pl-[3px] relative">
          <svg class="w-4 h-4 mr-[5px]"><use href="#adddb"/></svg>
          <span>添加 数据库连接</span>
          <svg class="absolute right-[5px] top-[7px] w-[12px] h-[8px]" viewBox="0 0 12 8"><path d="M1 1l5 5 5-5" fill="none" stroke="#666"/></svg>
        </div>
      </div>
      <div class="flex-1 min-h-0 bg-white border-2 border-[#9a9a9a] pl-[6px] pt-[1px] mb-[4px] whitespace-nowrap">
        <div class="h-5 flex items-center"><span class="w-[10px] h-[10px] border border-[#8a9ab0] flex items-center justify-center mr-[7px] relative"><i class="w-[6px] h-px bg-[#345a9a]"></i><i class="absolute w-px h-[6px] bg-[#345a9a]"></i></span><svg class="w-4 h-4 mr-[4px]"><use href="#fhome"/></svg>默认工作目录 -&nbsp;<span class="text-[15.700px]">ArcGIS\Data</span></div>
        <div class="h-5 flex items-center"><span class="w-[10px] h-[10px] border border-[#8a9ab0] flex items-center justify-center mr-[7px] relative"><i class="w-[6px] h-px bg-[#345a9a]"></i><i class="absolute w-px h-[6px] bg-[#345a9a]"></i></span><svg class="w-4 h-4 mr-[4px]"><use href="#fconn"/></svg>文件夹连接</div>
        <div class="h-5 flex items-center"><span class="w-[10px] h-[10px] border border-[#8a9ab0] flex items-center justify-center mr-[7px]"><i class="w-[6px] h-px bg-[#345a9a]"></i></span><svg class="w-4 h-4 mr-[4px]"><use href="#ftool"/></svg>工具箱</div>
        <div class="h-5 flex items-center pl-[36px]"><svg class="w-4 h-4 mr-[4px]"><use href="#ftool"/></svg>我的工具箱</div>
        <div class="h-5 flex items-center pl-[19px]"><span class="w-[10px] h-[10px] border border-[#8a9ab0] flex items-center justify-center mr-[7px] relative"><i class="w-[6px] h-px bg-[#345a9a]"></i><i class="absolute w-px h-[6px] bg-[#345a9a]"></i></span><svg class="w-4 h-4 mr-[4px]"><use href="#ftool"/></svg>系统工具箱</div>
        <div class="h-5 flex items-center"><span class="w-[10px] h-[10px] border border-[#8a9ab0] flex items-center justify-center mr-[7px]"><i class="w-[6px] h-px bg-[#345a9a]"></i></span><svg class="w-4 h-4 mr-[4px]"><use href="#fserver"/></svg>数据库服务器</div>
        <div class="h-5 flex items-center pl-[36px]"><svg class="w-4 h-4 mr-[4px]"><use href="#addsrv"/></svg>添加数据库服务器</div>
        <div class="h-5 flex items-center"><span class="w-[10px] h-[10px] border border-[#8a9ab0] flex items-center justify-center mr-[7px]"><i class="w-[6px] h-px bg-[#345a9a]"></i></span><svg class="w-4 h-4 mr-[4px]"><use href="#fdb"/></svg>数据库连接</div>
        <div class="h-5 flex items-center pl-[36px]"><svg class="w-4 h-4 mr-[2px]"><use href="#adddb"/></svg><span class="bg-[#f0f0f0] px-[2px] h-5 flex items-center">添加 数据库连接</span></div>
        <div class="h-5 flex items-center"><span class="w-[10px] h-[10px] border border-[#8a9ab0] flex items-center justify-center mr-[7px]"><i class="w-[6px] h-px bg-[#345a9a]"></i></span><svg class="w-4 h-4 mr-[4px]"><use href="#fgis"/></svg>GIS 服务器</div>
        <div class="h-5 flex items-center pl-[36px]"><svg class="w-4 h-4 mr-[4px]"><use href="#addgis"/></svg>添加&nbsp;<span class="text-[15.700px]">ArcGIS Server</span></div>
        <div class="h-5 flex items-center pl-[36px]"><svg class="w-4 h-4 mr-[4px]"><use href="#addgis"/></svg>添加&nbsp;<span class="text-[15.700px]">ArcIMS Server</span></div>
        <div class="h-5 flex items-center pl-[36px]"><svg class="w-4 h-4 mr-[4px]"><use href="#addwms"/></svg>添加&nbsp;<span class="text-[15.700px]">WCS</span>&nbsp;服务器</div>
        <div class="h-5 flex items-center pl-[36px]"><svg class="w-4 h-4 mr-[4px]"><use href="#addwms"/></svg>添加&nbsp;<span class="text-[15.700px]">WMS</span>&nbsp;服务器</div>
        <div class="h-5 flex items-center pl-[36px]"><svg class="w-4 h-4 mr-[4px]"><use href="#addwms"/></svg>添加&nbsp;<span class="text-[15.700px]">WMTS</span>&nbsp;服务器</div>
        <div class="h-5 flex items-center pl-[19px]"><span class="w-[10px] h-[10px] border border-[#8a9ab0] flex items-center justify-center mr-[7px] relative"><i class="w-[6px] h-px bg-[#345a9a]"></i><i class="absolute w-px h-[6px] bg-[#345a9a]"></i></span><svg class="w-4 h-4 mr-[4px]"><use href="#srvblue"/></svg><span class="text-[15.700px]">arcgis on localhost_6080 (</span>系统管理员)</div>
        <div class="h-5 flex items-center pl-[19px]"><span class="w-[10px] h-[10px] border border-[#8a9ab0] flex items-center justify-center mr-[7px] relative"><i class="w-[6px] h-px bg-[#345a9a]"></i><i class="absolute w-px h-[6px] bg-[#345a9a]"></i></span><svg class="w-4 h-4 mr-[4px]"><use href="#srvblue"/></svg><span class="text-[15.700px]">arcgis on localhost_6443 (</span>系统管理员)</div>
        <div class="h-5 flex items-center pl-[19px]"><span class="w-[10px] h-[10px] border border-[#8a9ab0] flex items-center justify-center mr-[7px]"><i class="w-[6px] h-px bg-[#345a9a]"></i></span><svg class="w-4 h-4 mr-[4px]"><use href="#srvorange"/></svg><span class="text-[15.700px]">World_Imagery</span>，在&nbsp;<span class="text-[15.700px]">services.arcgisonline.com</span>&nbsp;上</div>
        <div class="h-5 flex items-center pl-[55px]"><svg class="w-4 h-4 mr-[4px]"><use href="#stack"/></svg><span class="text-[15.700px]">World_Imagery</span></div>
        <div class="h-5 flex items-center pl-[17px]"><svg class="w-4 h-4 mr-[4px]"><use href="#fcloud"/></svg>我托管的服务</div>
        <div class="h-5 flex items-center pl-[17px]"><svg class="w-4 h-4 mr-[4px]"><use href="#fcloud"/></svg>即用型服务</div>
      </div>
    </div>

    <!-- Docked tabs -->
    <div class="w-[23px] ml-[4px] shrink-0 flex flex-col">
      <div class="h-[66px] mt-[1px] bg-[#f0f0f0] border border-[#9a9a9a] border-r-0 rounded-bl-[4px] flex flex-col items-center pt-[3px] text-[#666]">
        <svg class="w-4 h-4"><use href="#wincat"/></svg>
        <span class="[writing-mode:vertical-rl] [text-orientation:sideways] mt-[6px]">目录</span>
      </div>
      <div class="h-[52px] bg-[#f0f0f0] border border-t-0 border-[#9a9a9a] border-r-0 rounded-bl-[4px] flex flex-col items-center text-[#666]">
        <svg class="w-4 h-4"><use href="#winsearch"/></svg>
        <span class="[writing-mode:vertical-rl] [text-orientation:sideways] mt-[3px]">搜索</span>
      </div>
    </div>
  </div>

  <!-- Status bar -->
  <div class="h-[26px] shrink-0 border-b border-[#a8a8a8] flex items-center pl-[814px] whitespace-pre"><span class="text-[15.700px]">200.503  62.293 </span>十进制度</div>

  <!-- Dialog -->
  <div class="absolute left-[138px] top-[374px] w-[576px] h-[440px] bg-[#f0f0f0] border border-[#555] shadow-[3px_4px_10px_rgba(0,0,0,0.35)] flex flex-col">
    <div class="h-[36px] shrink-0 bg-white flex items-center pl-[9px]">
      <span>数据库连接</span>
      <svg class="ml-auto mr-[14px] w-[13px] h-[13px]" viewBox="0 0 13 13"><path d="M.5 .5l12 12M12.500 .5l-12 12" stroke="#222"/></svg>
    </div>
    <div class="flex-1 relative">
      <div class="h-[68px] pt-[16px] flex items-start pl-[39px]">
        <span class="w-[162px] h-[17px] flex items-center">数据库平台:</span>
        <div class="w-[348px] h-[23px] bg-[#e1e1e1] border border-[#adadad] flex items-center pl-[3px] relative text-[13px]">SQL Server
          <svg class="absolute right-[4px] top-[7px] w-[12px] h-[8px]" viewBox="0 0 12 8"><path d="M1 1l5 5 5-5" fill="none" stroke="#666"/></svg>
        </div>
      </div>
      <div class="h-[86px] pt-[12px] flex items-start pl-[39px]">
        <span class="w-[162px] h-[22px] flex items-center">实例:</span>
        <div class="w-[348px] h-[28px] bg-white border border-[#7a7a7a]"></div>
      </div>
      <div class="h-[40px] flex items-start pl-[39px]">
        <span class="w-[162px] h-[28px] flex items-center">身份验证类型:</span>
        <div class="w-[348px] h-[23px] bg-[#e1e1e1] border border-[#adadad] flex items-center pl-[3px] relative">操作系统身份验证
          <svg class="absolute right-[4px] top-[7px] w-[12px] h-[8px]" viewBox="0 0 12 8"><path d="M1 1l5 5 5-5" fill="none" stroke="#666"/></svg>
        </div>
      </div>
      <div class="h-[33px] flex items-start pl-[206px]">
        <span class="w-[130px] h-[28px] flex items-center">用户名:</span>
        <div class="w-[214px] h-[28px] border border-[#ccc] shadow-[inset_0_0_0_1px_#fff]"></div>
      </div>
      <div class="h-[67px] flex items-start pl-[206px]">
        <span class="w-[130px] h-[28px] flex items-center">密码:</span>
        <div class="w-[214px] h-[28px] border border-[#ccc] shadow-[inset_0_0_0_1px_#fff]"></div>
      </div>
      <div class="h-[62px] flex items-start pl-[38px]">
        <span class="w-[163px] h-[20px] flex items-center">数据库:</span>
        <div class="w-[348px] h-[23px] bg-white border border-[#7a7a7a] relative">
          <svg class="absolute right-[4px] top-[7px] w-[12px] h-[8px]" viewBox="0 0 12 8"><path d="M1 1l5 5 5-5" fill="none" stroke="#666"/></svg>
        </div>
      </div>
      <div class="flex items-start pl-[30px]">
        <span class="text-[#0000ee] underline w-[346px]">关于数据库连接</span>
        <div class="w-[86px] h-[26px] bg-[#cccccc] border border-[#bfbfbf] text-[#8a8a8a] flex items-center justify-center">确定</div>
        <div class="w-[86px] h-[26px] ml-[6px] bg-[#e1e1e1] border border-[#adadad] flex items-center justify-center">取消</div>
      </div>
    </div>
  </div>

  <!-- Annotations drawn on top of the screenshot -->
  <svg class="absolute left-[-1px] top-0 w-[1191px] h-[976px] pointer-events-none" viewBox="0 0 1191 976" fill="none" stroke="#ef3a3a" stroke-opacity=".85">
    <ellipse cx="1176" cy="151" rx="15" ry="37"/>
    <ellipse cx="833" cy="371" rx="101" ry="22"/>
    <ellipse cx="506" cy="445" rx="210" ry="26"/>
  </svg>
  <div class="absolute left-[1114px] top-[144px] w-[26px] h-[26px] rounded-full bg-[#f03a3a] text-white text-[14px] flex items-center justify-center">1</div>
  <div class="absolute left-[936px] top-[365px] w-[26px] h-[26px] rounded-full bg-[#f03a3a] text-white text-[14px] flex items-center justify-center">2</div>
  <div class="absolute left-[571px] top-[389px] w-[26px] h-[26px] rounded-full bg-[#f03a3a] text-white text-[14px] flex items-center justify-center">3</div>
</div>
</body>
</html>
